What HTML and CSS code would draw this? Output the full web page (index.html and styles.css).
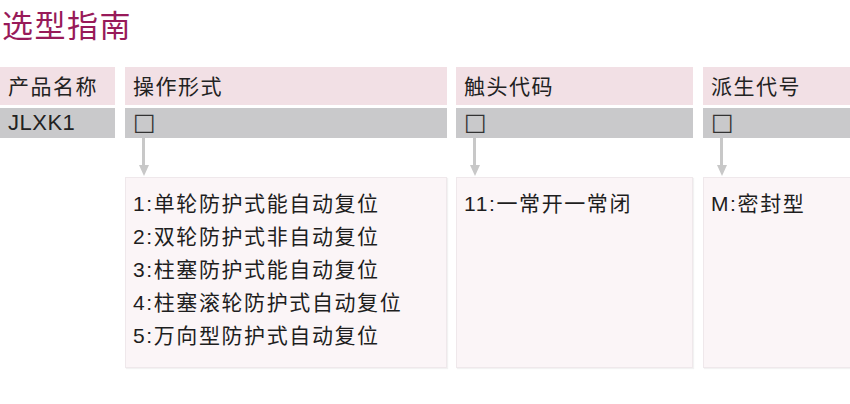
FILE: index.html
```html
<!DOCTYPE html>
<html lang="zh-CN">
<head>
<meta charset="utf-8">
<title>选型指南</title>
<link rel="stylesheet" href="styles.css">
</head>
<body>
<h1 class="title">选型指南</h1>
<div class="guide">
  <div class="head first">产品名称</div>
  <div class="head">操作形式</div>
  <div class="head">触头代码</div>
  <div class="head">派生代号</div>

  <div class="val first">JLXK1</div>
  <div class="val"><span class="box">□</span></div>
  <div class="val"><span class="box">□</span></div>
  <div class="val"><span class="box">□</span></div>

  <div class="empty"></div>
  <div class="arrow"><span class="shaft"></span><span class="tip"></span></div>
  <div class="arrow"><span class="shaft"></span><span class="tip"></span></div>
  <div class="arrow"><span class="shaft"></span><span class="tip"></span></div>

  <div class="empty"></div>
  <div class="card">
    <p>1:单轮防护式能自动复位</p>
    <p>2:双轮防护式非自动复位</p>
    <p>3:柱塞防护式能自动复位</p>
    <p>4:柱塞滚轮防护式自动复位</p>
    <p>5:万向型防护式自动复位</p>
  </div>
  <div class="card">
    <p>11:一常开一常闭</p>
  </div>
  <div class="card">
    <p>M:密封型</p>
  </div>
</div>
</body>
</html>
```

FILE: styles.css
```css
* { box-sizing: border-box; }
html, body { margin: 0; padding: 0; background: #ffffff; }
body {
  width: 850px;
  height: 404px;
  overflow: hidden;
  font-family: "Liberation Sans", "Noto Sans CJK SC", sans-serif;
  color: #222222;
}
.title {
  margin: 0;
  padding: 3px 0 0 2px;
  height: 67px;
  font-family: "Noto Sans CJK SC", sans-serif;
  font-weight: 400;
  font-size: 31px;
  line-height: 42px;
  letter-spacing: 1.5px;
  color: #981a59;
}
.guide {
  display: grid;
  grid-template-columns: 115px 322px 236px 148px;
  grid-template-rows: 38px 33px 39px 191px;
  column-gap: 10px;
  row-gap: 0;
  width: 850px;
}
.guide > :nth-child(4n+3) { margin-left: -1px; }
.head {
  background: #f2e0e5;
  font-family: "Noto Sans CJK SC", sans-serif;
  font-size: 21px;
  line-height: 36px;
  letter-spacing: 1.5px;
  padding-left: 8px;
  color: #222222;
  height: 38px;
}
.val {
  background: #c9c9cb;
  margin-top: 3px;
  height: 30px;
  padding-left: 8px;
  font-size: 22px;
  line-height: 30px;
  color: #222;
}
.val.first { letter-spacing: 0.5px; }
.box {
  font-family: "DejaVu Sans", sans-serif;
  font-size: 24px;
  line-height: 28px;
  color: #333;
}
.arrow {
  height: 39px;
  padding-left: 16px;
  display: flex;
  flex-direction: column;
  align-items: flex-start;
}
.shaft {
  width: 3px;
  height: 27px;
  margin-left: 1px;
  background: #c8c8c8;
}
.tip {
  width: 0;
  height: 0;
  border-left: 5px solid transparent;
  border-right: 5px solid transparent;
  border-top: 11px solid #c8c8c8;
  margin-left: -2.5px;
}
.card {
  background: #fbf5f7;
  border: 1px solid #efe8eb;
  box-shadow: 1px 1px 1px rgba(0,0,0,0.05);
  padding: 9px 0 0 7px;
  height: 191px;
}
.card p {
  margin: 0;
  font-size: 21px;
  line-height: 33px;
  letter-spacing: 1.6px;
  color: #1e1e1e;
  white-space: nowrap;
}
```
